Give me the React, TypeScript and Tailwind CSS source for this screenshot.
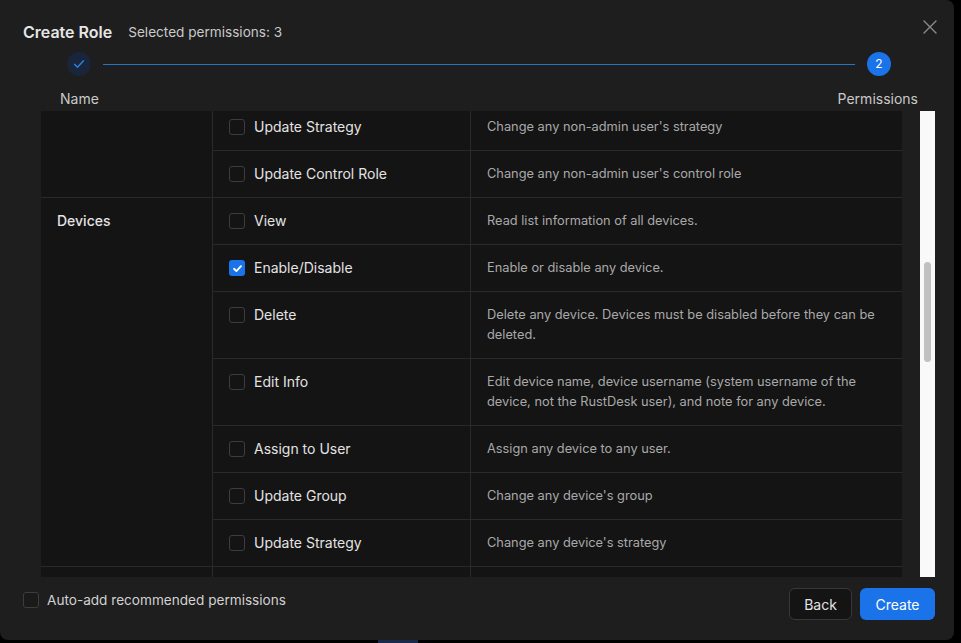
import React from "react";

type Perm = { name: string; desc: string; checked?: boolean };

const Check = ({ checked }: { checked?: boolean }) =>
  checked ? (
    <span className="flex h-4 w-4 shrink-0 items-center justify-center rounded-[3px] bg-[#1a73e8]">
      <svg width="11" height="11" viewBox="0 0 12 12" fill="none">
        <path d="M2.2 6.3l2.6 2.5 5-5.3" stroke="#fff" strokeWidth="2" strokeLinecap="round" strokeLinejoin="round" />
      </svg>
    </span>
  ) : (
    <span className="block h-4 w-4 shrink-0 rounded-[3px] border border-[#3d3d3d]" />
  );

const Row = ({ p }: { p: Perm }) => (
  <div className="grid grid-cols-[258px_1fr] border-b border-[#2a2a2a]">
    <div className="flex items-start gap-[9px] border-r border-[#2a2a2a] px-[16px] py-[13px]">
      <span className="mt-[2px]">
        <Check checked={p.checked} />
      </span>
      <span className="text-[14px] leading-[20px] text-[#e3e3e3]">{p.name}</span>
    </div>
    <div className="py-[13px] pl-[16px] pr-[16px] text-[12.8px] leading-[20px] text-[#a9a9a9]">{p.desc}</div>
  </div>
);

const Group = ({ title, perms }: { title: string; perms: Perm[] }) => (
  <div className="flex border-b border-[#2a2a2a]">
    <div className="w-[172px] shrink-0 border-r border-[#2a2a2a] px-4 py-[13px] text-[14px] font-medium leading-[20px] text-[#e3e3e3]">
      {title}
    </div>
    <div className="flex-1 [&>*:last-child]:border-b-0">
      {perms.map((p) => (
        <Row key={p.name} p={p} />
      ))}
    </div>
  </div>
);

export default function App() {
  const users: Perm[] = [
    { name: "Update Strategy", desc: "Change any non-admin user's strategy" },
    { name: "Update Control Role", desc: "Change any non-admin user's control role" },
  ];
  const devices: Perm[] = [
    { name: "View", desc: "Read list information of all devices." },
    { name: "Enable/Disable", desc: "Enable or disable any device.", checked: true },
    { name: "Delete", desc: "Delete any device. Devices must be disabled before they can be deleted." },
    {
      name: "Edit Info",
      desc: "Edit device name, device username (system username of the device, not the RustDesk user), and note for any device.",
    },
    { name: "Assign to User", desc: "Assign any device to any user." },
    { name: "Update Group", desc: "Change any device's group" },
    { name: "Update Strategy", desc: "Change any device's strategy" },
  ];

  return (
    <div className="relative h-[643px] w-[961px] overflow-hidden bg-black font-['Inter','Noto_Sans',sans-serif]">
      <div className="absolute bottom-0 left-[378px] h-[3px] w-[40px] bg-[#1a2a4a]" />
      <div className="flex h-[640px] w-[954px] flex-col rounded-b-[8px] rounded-tr-[8px] bg-[#1e1e1e]">
        {/* header */}
        <div className="flex items-center pl-[23px] pr-[16px] pt-[21px]">
          <h1 className="text-[16px] font-semibold leading-[22px] text-[#e6e6e6]">Create Role</h1>
          <span className="ml-[16px] text-[13.6px] leading-[22px] text-[#cacaca]">Selected permissions: 3</span>
          <button className="ml-auto mt-[-10px] text-[#8a8a8a]">
            <svg width="16" height="16" viewBox="0 0 16 16" fill="none">
              <path d="M2 2l12 12M14 2L2 14" stroke="currentColor" strokeWidth="1.4" strokeLinecap="round" />
            </svg>
          </button>
        </div>
        {/* stepper */}
        <div className="mt-[9px] flex items-center px-[67px] pr-[63px]">
          <div className="flex h-6 w-6 items-center justify-center rounded-full bg-[#19253a]">
            <svg width="12" height="12" viewBox="0 0 12 12" fill="none">
              <path d="M1.5 6.2l3 3 6-6.4" stroke="#2f80e0" strokeWidth="1.4" strokeLinecap="round" strokeLinejoin="round" />
            </svg>
          </div>
          <div className="mx-3 h-px flex-1 bg-[#2a74c8]" />
          <div className="flex h-6 w-6 items-center justify-center rounded-full bg-[#1a73e8] text-[12px] leading-none text-white">
            2
          </div>
        </div>
        <div className="mt-[15px] flex justify-between pl-[60px] pr-[36px] text-[14px] leading-[16px] text-[#c9c9c9]">
          <span>Name</span>
          <span>Permissions</span>
        </div>
        {/* table */}
        <div className="mt-[4px] flex h-[466px] pl-[41px]">
          <div className="h-full w-[861px] overflow-hidden bg-[#141414]">
            <div className="mt-[-7px]">
              <Group title="" perms={users} />
              <Group title="Devices" perms={devices} />
              <div className="flex h-[47px]">
                <div className="w-[172px] shrink-0 border-r border-[#2a2a2a]" />
                <div className="w-[258px] shrink-0 border-r border-[#2a2a2a]" />
              </div>
            </div>
          </div>
          <div className="ml-[18px] h-full w-[15px] bg-[#f9f9f9] px-[4px] pt-[151px]">
            <div className="h-[100px] w-full rounded-full bg-[#c1c1c1]" />
          </div>
        </div>
        {/* footer */}
        <div className="mt-[11px] flex items-center pl-[23px] pr-[19px]">
          <label className="mt-[-9px] flex items-center gap-2">
            <span className="block h-4 w-4 rounded-[3px] border border-[#3d3d3d] bg-[#1a1a1a]" />
            <span className="text-[13.6px] leading-[20px] text-[#d2d2d2]">Auto-add recommended permissions</span>
          </label>
          <div className="ml-auto flex gap-2">
            <button className="h-[32px] w-[63px] rounded-[6px] border border-[#383838] bg-[#141414] text-[14px] text-[#e3e3e3]">
              Back
            </button>
            <button className="h-[32px] w-[75px] rounded-[6px] bg-[#1a73e8] text-[14px] text-white">Create</button>
          </div>
        </div>
      </div>
    </div>
  );
}
